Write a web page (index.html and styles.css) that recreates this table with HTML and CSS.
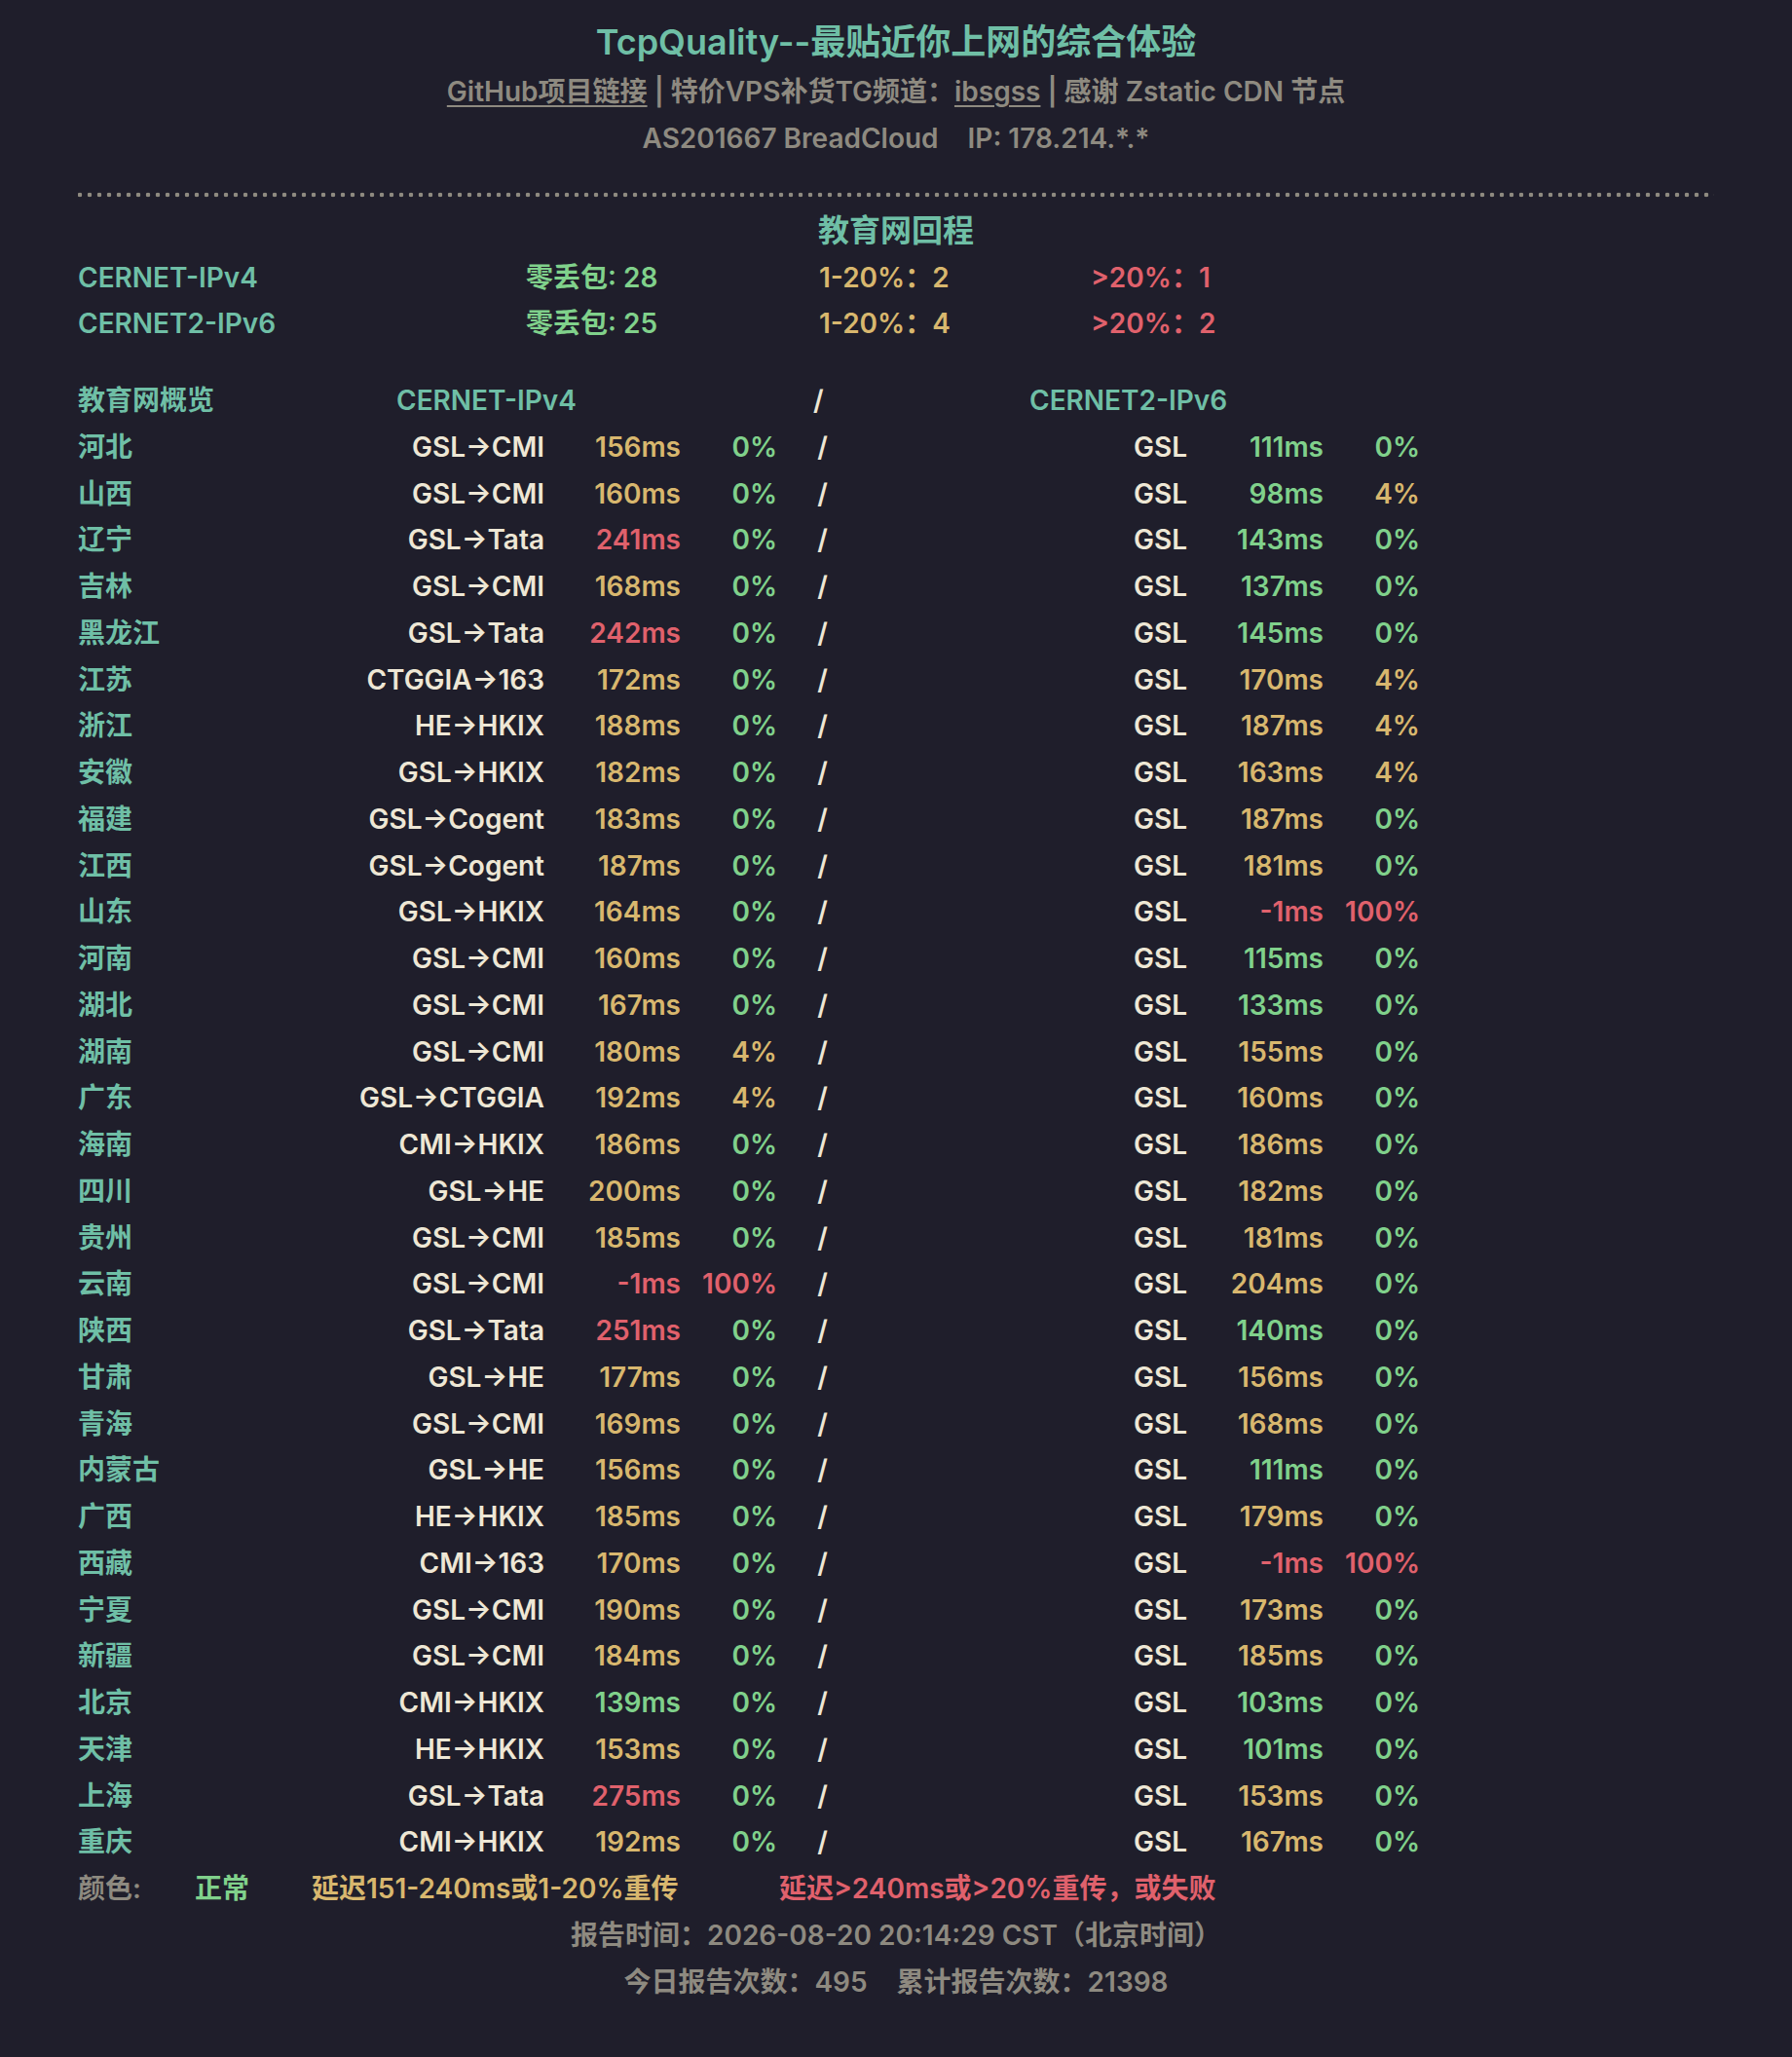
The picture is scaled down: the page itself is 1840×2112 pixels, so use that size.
FILE: index.html
```html
<!DOCTYPE html>
<html lang="zh-CN">
<head>
<meta charset="utf-8">
<title>TcpQuality</title>
<link rel="stylesheet" href="styles.css">
</head>
<body>
<div class="page">
  <header class="head">
    <h1 class="title">TcpQuality--最贴近你上网的综合体验</h1>
    <div class="sub"><a class="lnk">GitHub项目链接</a> | 特价VPS补货TG频道：<a class="lnk">ibsgss</a> | 感谢 Zstatic CDN 节点</div>
    <div class="sub">AS201667 BreadCloud<span class="gap">IP: 178.214.*.*</span></div>
  </header>
  <div class="sep"></div>
  <h2 class="sec">教育网回程</h2>
  <div class="stats">
    <div class="stat"><span class="t">CERNET-IPv4</span><span class="g">零丢包: 28</span><span class="y">1-20%：2</span><span class="r">&gt;20%：1</span></div>
    <div class="stat"><span class="t">CERNET2-IPv6</span><span class="g">零丢包: 25</span><span class="y">1-20%：4</span><span class="r">&gt;20%：2</span></div>
  </div>
  <div class="table">
    <div class="thead"><span class="t">教育网概览</span><span class="t">CERNET-IPv4</span><span class="c slash">/</span><span class="t">CERNET2-IPv6</span></div>
    <div class="row"><span class="t">河北</span><span>GSL→CMI</span><span class="y">156ms</span><span class="g">0%</span><span class="slash">/</span><span>GSL</span><span class="g">111ms</span><span class="g">0%</span></div>
    <div class="row"><span class="t">山西</span><span>GSL→CMI</span><span class="y">160ms</span><span class="g">0%</span><span class="slash">/</span><span>GSL</span><span class="g">98ms</span><span class="y">4%</span></div>
    <div class="row"><span class="t">辽宁</span><span>GSL→Tata</span><span class="r">241ms</span><span class="g">0%</span><span class="slash">/</span><span>GSL</span><span class="g">143ms</span><span class="g">0%</span></div>
    <div class="row"><span class="t">吉林</span><span>GSL→CMI</span><span class="y">168ms</span><span class="g">0%</span><span class="slash">/</span><span>GSL</span><span class="g">137ms</span><span class="g">0%</span></div>
    <div class="row"><span class="t">黑龙江</span><span>GSL→Tata</span><span class="r">242ms</span><span class="g">0%</span><span class="slash">/</span><span>GSL</span><span class="g">145ms</span><span class="g">0%</span></div>
    <div class="row"><span class="t">江苏</span><span>CTGGIA→163</span><span class="y">172ms</span><span class="g">0%</span><span class="slash">/</span><span>GSL</span><span class="y">170ms</span><span class="y">4%</span></div>
    <div class="row"><span class="t">浙江</span><span>HE→HKIX</span><span class="y">188ms</span><span class="g">0%</span><span class="slash">/</span><span>GSL</span><span class="y">187ms</span><span class="y">4%</span></div>
    <div class="row"><span class="t">安徽</span><span>GSL→HKIX</span><span class="y">182ms</span><span class="g">0%</span><span class="slash">/</span><span>GSL</span><span class="y">163ms</span><span class="y">4%</span></div>
    <div class="row"><span class="t">福建</span><span>GSL→Cogent</span><span class="y">183ms</span><span class="g">0%</span><span class="slash">/</span><span>GSL</span><span class="y">187ms</span><span class="g">0%</span></div>
    <div class="row"><span class="t">江西</span><span>GSL→Cogent</span><span class="y">187ms</span><span class="g">0%</span><span class="slash">/</span><span>GSL</span><span class="y">181ms</span><span class="g">0%</span></div>
    <div class="row"><span class="t">山东</span><span>GSL→HKIX</span><span class="y">164ms</span><span class="g">0%</span><span class="slash">/</span><span>GSL</span><span class="r">-1ms</span><span class="r">100%</span></div>
    <div class="row"><span class="t">河南</span><span>GSL→CMI</span><span class="y">160ms</span><span class="g">0%</span><span class="slash">/</span><span>GSL</span><span class="g">115ms</span><span class="g">0%</span></div>
    <div class="row"><span class="t">湖北</span><span>GSL→CMI</span><span class="y">167ms</span><span class="g">0%</span><span class="slash">/</span><span>GSL</span><span class="g">133ms</span><span class="g">0%</span></div>
    <div class="row"><span class="t">湖南</span><span>GSL→CMI</span><span class="y">180ms</span><span class="y">4%</span><span class="slash">/</span><span>GSL</span><span class="y">155ms</span><span class="g">0%</span></div>
    <div class="row"><span class="t">广东</span><span>GSL→CTGGIA</span><span class="y">192ms</span><span class="y">4%</span><span class="slash">/</span><span>GSL</span><span class="y">160ms</span><span class="g">0%</span></div>
    <div class="row"><span class="t">海南</span><span>CMI→HKIX</span><span class="y">186ms</span><span class="g">0%</span><span class="slash">/</span><span>GSL</span><span class="y">186ms</span><span class="g">0%</span></div>
    <div class="row"><span class="t">四川</span><span>GSL→HE</span><span class="y">200ms</span><span class="g">0%</span><span class="slash">/</span><span>GSL</span><span class="y">182ms</span><span class="g">0%</span></div>
    <div class="row"><span class="t">贵州</span><span>GSL→CMI</span><span class="y">185ms</span><span class="g">0%</span><span class="slash">/</span><span>GSL</span><span class="y">181ms</span><span class="g">0%</span></div>
    <div class="row"><span class="t">云南</span><span>GSL→CMI</span><span class="r">-1ms</span><span class="r">100%</span><span class="slash">/</span><span>GSL</span><span class="y">204ms</span><span class="g">0%</span></div>
    <div class="row"><span class="t">陕西</span><span>GSL→Tata</span><span class="r">251ms</span><span class="g">0%</span><span class="slash">/</span><span>GSL</span><span class="g">140ms</span><span class="g">0%</span></div>
    <div class="row"><span class="t">甘肃</span><span>GSL→HE</span><span class="y">177ms</span><span class="g">0%</span><span class="slash">/</span><span>GSL</span><span class="y">156ms</span><span class="g">0%</span></div>
    <div class="row"><span class="t">青海</span><span>GSL→CMI</span><span class="y">169ms</span><span class="g">0%</span><span class="slash">/</span><span>GSL</span><span class="y">168ms</span><span class="g">0%</span></div>
    <div class="row"><span class="t">内蒙古</span><span>GSL→HE</span><span class="y">156ms</span><span class="g">0%</span><span class="slash">/</span><span>GSL</span><span class="g">111ms</span><span class="g">0%</span></div>
    <div class="row"><span class="t">广西</span><span>HE→HKIX</span><span class="y">185ms</span><span class="g">0%</span><span class="slash">/</span><span>GSL</span><span class="y">179ms</span><span class="g">0%</span></div>
    <div class="row"><span class="t">西藏</span><span>CMI→163</span><span class="y">170ms</span><span class="g">0%</span><span class="slash">/</span><span>GSL</span><span class="r">-1ms</span><span class="r">100%</span></div>
    <div class="row"><span class="t">宁夏</span><span>GSL→CMI</span><span class="y">190ms</span><span class="g">0%</span><span class="slash">/</span><span>GSL</span><span class="y">173ms</span><span class="g">0%</span></div>
    <div class="row"><span class="t">新疆</span><span>GSL→CMI</span><span class="y">184ms</span><span class="g">0%</span><span class="slash">/</span><span>GSL</span><span class="y">185ms</span><span class="g">0%</span></div>
    <div class="row"><span class="t">北京</span><span>CMI→HKIX</span><span class="g">139ms</span><span class="g">0%</span><span class="slash">/</span><span>GSL</span><span class="g">103ms</span><span class="g">0%</span></div>
    <div class="row"><span class="t">天津</span><span>HE→HKIX</span><span class="y">153ms</span><span class="g">0%</span><span class="slash">/</span><span>GSL</span><span class="g">101ms</span><span class="g">0%</span></div>
    <div class="row"><span class="t">上海</span><span>GSL→Tata</span><span class="r">275ms</span><span class="g">0%</span><span class="slash">/</span><span>GSL</span><span class="y">153ms</span><span class="g">0%</span></div>
    <div class="row"><span class="t">重庆</span><span>CMI→HKIX</span><span class="y">192ms</span><span class="g">0%</span><span class="slash">/</span><span>GSL</span><span class="y">167ms</span><span class="g">0%</span></div>
  </div>
  <div class="legend"><span class="m">颜色:</span><span class="g">正常</span><span class="y">延迟151-240ms或1-20%重传</span><span class="r">延迟&gt;240ms或&gt;20%重传，或失败</span></div>
  <div class="foot">报告时间：2026-08-20 20:14:29 CST（北京时间）</div>
  <div class="foot">今日报告次数：495<span class="gap">累计报告次数：21398</span></div>
</div>
</body>
</html>
```

FILE: styles.css
```css
html, body {
  margin: 0;
  background: #1f1e2b;
}
body {
  font-family: Inter, "Noto Sans CJK SC", sans-serif;
  font-weight: 600;
  font-size: 28px;
  line-height: 47.75px;
  color: #eee7d5;
}
.page {
  padding: 16px 80px 0;
}
.head {
  text-align: center;
}
.title {
  margin: 0;
  font-size: 36px;
  line-height: 55px;
  font-weight: 600;
  color: #6fbfa6;
}
.sub {
  color: #8e8a80;
}
.lnk {
  color: #8e8a80;
  text-decoration: underline;
  text-underline-offset: 4px;
  text-decoration-thickness: 2px;
}
.gap {
  margin-left: 30px;
}
.sep {
  height: 6px;
  margin: 30px 0 10px;
  background-image: radial-gradient(circle, #8e8a80 2px, transparent 2.6px);
  background-size: 10px 6px;
  background-position: -3px 0;
  background-repeat: repeat-x;
}
.sec {
  margin: 0 0 1px;
  text-align: center;
  font-size: 32px;
  line-height: 48px;
  font-weight: 600;
  color: #6fbfa6;
}
.stat {
  display: grid;
  grid-template-columns: 460px 301px 279px 1fr;
}
.table {
  margin-top: 31px;
}
.thead {
  display: grid;
  grid-template-columns: 327px 428px 222px 1fr;
}
.thead .slash {
  color: #eee7d5;
}
.row {
  display: grid;
  grid-template-columns: 200px 279px 140px 99px 93px 328px 140px 99px;
  text-align: right;
}
.row .t {
  text-align: left;
}
.row .slash {
  text-align: center;
}
.legend {
  display: grid;
  grid-template-columns: 120px 120px 480px 1fr;
}
.foot {
  text-align: center;
  color: #8e8a80;
}
.t { color: #6fbfa6; }
.g { color: #80d18b; }
.y { color: #d8b76e; }
.r { color: #e0616c; }
.m { color: #8e8a80; }
```
